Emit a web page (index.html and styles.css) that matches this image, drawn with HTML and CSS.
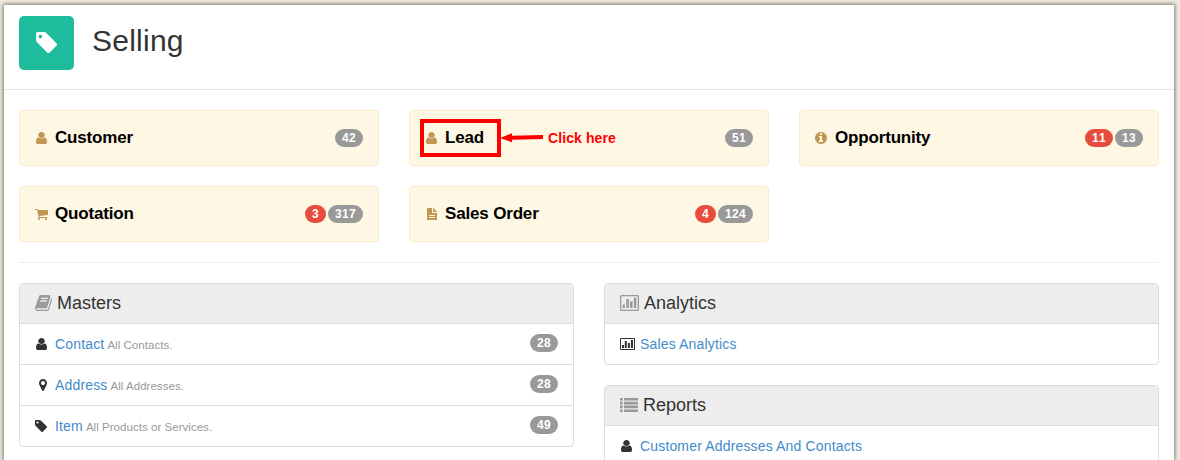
FILE: index.html
```
<!DOCTYPE html>
<html lang="en">
<head>
<meta charset="utf-8">
<title>Selling</title>
<link rel="stylesheet" href="styles.css">
</head>
<body>
<svg class="sprite">
  <symbol id="user" viewBox="256 128 1280 1536" preserveAspectRatio="none"><path d="M1536 1399q0 109-62.5 187t-150.5 78h-854q-88 0-150.5-78t-62.5-187q0-85 8.5-160.5t31.5-152 58.5-131 94-89 134.5-34.5q131 128 313 128t313-128q76 0 134.5 34.5t94 89 58.5 131 31.5 152 8.5 160.5zm-256-887q0 159-112.5 271.5t-271.5 112.5-271.5-112.5-112.5-271.5 112.5-271.5 271.5-112.5 271.5 112.5 112.5 271.5z"/></symbol>
  <symbol id="tag" viewBox="128 128 1516 1516" preserveAspectRatio="none"><path d="M576 448q0-53-37.5-90.5t-90.5-37.5-90.5 37.5-37.5 90.5 37.5 90.5 90.5 37.5 90.5-37.5 37.5-90.5zm1067 576q0 53-37 90l-491 492q-39 37-91 37-53 0-90-37l-715-716q-38-37-64.5-101t-26.5-117v-416q0-52 38-90t90-38h416q53 0 117 26.5t102 64.5l715 714q37 39 37 91z"/></symbol>
  <symbol id="marker" viewBox="384 128 1024 1536" preserveAspectRatio="none"><path d="M1152 640q0-106-75-181t-181-75-181 75-75 181 75 181 181 75 181-75 75-181zm256 0q0 109-33 179l-364 774q-16 33-47.5 52t-67.5 19-67.5-19-46.5-52l-365-774q-33-70-33-179 0-212 150-362t362-150 362 150 150 362z"/></symbol>
  <symbol id="cart" viewBox="64 256 1664 1408" preserveAspectRatio="none"><path d="M704 1536q0 52-38 90t-90 38-90-38-38-90 38-90 90-38 90 38 38 90zm896 0q0 52-38 90t-90 38-90-38-38-90 38-90 90-38 90 38 38 90zm128-1088v512q0 24-16.5 42.5t-40.5 21.5l-1044 122q13 60 13 70 0 16-24 64h920q26 0 45 19t19 45-19 45-45 19h-1024q-26 0-45-19t-19-45q0-11 8-31.5t16-36 21.5-40 15.5-29.5l-177-823h-204q-26 0-45-19t-19-45 19-45 45-19h256q16 0 28.5 6.5t19.5 15.5 13 24.5 8 26 5.5 29.5 4.5 26h1201q26 0 45 19t19 45z"/></symbol>
  <symbol id="info" viewBox="128 128 1536 1536"><path d="M1152 1376v-160q0-14-9-23t-23-9h-96v-512q0-14-9-23t-23-9h-320q-14 0-23 9t-9 23v160q0 14 9 23t23 9h96v320h-96q-14 0-23 9t-9 23v160q0 14 9 23t23 9h448q14 0 23-9t9-23zm-128-896v-160q0-14-9-23t-23-9h-192q-14 0-23 9t-9 23v160q0 14 9 23t23 9h192q14 0 23-9t9-23zm640 416q0 209-103 385.5t-279.5 279.5-385.5 103-385.5-103-279.5-279.5-103-385.5 103-385.5 279.5-279.5 385.5-103 385.5 103 279.5 279.5 103 385.5z"/></symbol>
  <symbol id="file" viewBox="0 0 10 12"><path fill-rule="evenodd" d="M.6 0H5v4.4q0 .6.6.6H10v6.4q0 .6-.6.6H.6Q0 12 0 11.4V.6Q0 0 .6 0zM6 0q.4.1.7.4l2.9 2.9q.3.3.4.7H6zM2 7v1h6V7zM2 9v1h6V9z"/></symbol>
  <symbol id="book" viewBox="63 128 1668 1536" preserveAspectRatio="none"><path d="M1703 478q40 57 18 129l-275 906q-19 64-76.5 107.5t-122.5 43.5h-923q-77 0-148.5-53.5t-99.5-131.5q-24-67-2-127 0-4 3-27t4-37q1-8-3-21.5t-3-19.5q2-11 8-21t16.5-23.5 16.5-23.5q23-38 45-91.5t30-91.5q3-10 .5-30t-.5-28q3-11 17-28t17-23q21-36 42-92t25-90q1-9-2.5-32t.5-28q4-13 22-30.5t22-22.5q19-26 42.5-84.5t27.5-96.5q1-8-3-25.5t-2-26.5q2-8 9-18t18-23 17-21q8-12 16.5-30.5t15-35 16-36 19.5-32 26.5-23.5 36-11.5 47.5 5.5l-1 3q38-9 51-9h761q74 0 114 56t18 130l-274 906q-36 119-71.5 153.5t-128.5 34.5h-869q-27 0-38 15-11 16-1 43 24 70 144 70h923q29 0 56-15.5t35-41.5l300-987q7-22 5-57 38 15 59 43zm-1064 2q-4 13 2 22.5t20 9.5h608q13 0 25.5-9.5t16.5-22.5l21-64q4-13-2-22.5t-20-9.5h-608q-13 0-25.5 9.5t-16.5 22.5zm-83 256q-4 13 2 22.5t20 9.5h608q13 0 25.5-9.5t16.5-22.5l21-64q4-13-2-22.5t-20-9.5h-608q-13 0-25.5 9.5t-16.5 22.5z"/></symbol>
  <symbol id="chart" viewBox="0 0 15 12"><path fill-rule="evenodd" d="M1 0h13q1 0 1 1v10q0 1-1 1H1q-1 0-1-1V1q0-1 1-1zm0 1v10h13V1zM2 7h2v3H2zM4.8 3h2v7h-2zM7.9 5h2v5h-2zM10.9 2h2.1v8h-2.1z"/></symbol>
  <symbol id="chart-lg" viewBox="0 0 19 16"><path fill-rule="evenodd" d="M1.5 0h16Q19 0 19 1.5v13q0 1.5-1.5 1.5h-16Q0 16 0 14.5v-13Q0 0 1.5 0zm.2 1.3q-.4 0-.4.4v12.6q0 .4.4.4h15.6q.4 0 .4-.4V1.7q0-.4-.4-.4zM2.6 9.5h2.3V13H2.6zM6.3 4h2.5v9H6.3zM10 6.5h2.5V13H10zM13.8 2.8h2.5V13h-2.5z"/></symbol>
  <symbol id="list" viewBox="0 0 18 14"><path d="M0 0h2.7v2.6H0zM4 0h14v2.6H4zM0 3.8h2.7v2.6H0zM4 3.8h14v2.6H4zM0 7.6h2.7v2.6H0zM4 7.6h14v2.6H4zM0 11.4h2.7V14H0zM4 11.4h14V14H4z"/></symbol>
</svg>

<main class="page">
  <header class="title-bar">
    <span class="app-icon"><svg class="i-app"><use href="#tag"/></svg></span>
    <h1>Selling</h1>
  </header>
  <div class="content">
    <section class="cards">
      <a class="card"><span class="slot"><svg class="i-user"><use href="#user"/></svg></span><b>Customer</b><span class="badge">42</span></a>
      <a class="card"><span class="slot"><svg class="i-user"><use href="#user"/></svg></span><b>Lead</b><span class="badge">51</span>
        <span class="callout-box"></span>
        <svg class="callout-arrow" viewBox="0 0 44 10"><path d="M0 5 12 .2V2.8L43 2v4l-31 .8v2.5z"/></svg>
        <span class="callout-text">Click here</span>
      </a>
      <a class="card"><span class="slot"><svg class="i-info"><use href="#info"/></svg></span><b>Opportunity</b><span class="badge open">11</span><span class="badge">13</span></a>
      <a class="card"><span class="slot"><svg class="i-cart"><use href="#cart"/></svg></span><b>Quotation</b><span class="badge open">3</span><span class="badge">317</span></a>
      <a class="card"><span class="slot"><svg class="i-file"><use href="#file"/></svg></span><b>Sales Order</b><span class="badge open">4</span><span class="badge">124</span></a>
    </section>
    <section class="columns">
      <div class="column">
        <div class="panel">
          <h2><svg class="i-book"><use href="#book"/></svg>Masters</h2>
          <div class="row"><span class="slot"><svg class="i-user"><use href="#user"/></svg></span><a>Contact</a><small>All Contacts.</small><span class="badge">28</span></div>
          <div class="row"><span class="slot"><svg class="i-marker"><use href="#marker"/></svg></span><a>Address</a><small>All Addresses.</small><span class="badge">28</span></div>
          <div class="row"><span class="slot"><svg class="i-tag"><use href="#tag"/></svg></span><a>Item</a><small>All Products or Services.</small><span class="badge">49</span></div>
        </div>
      </div>
      <div class="column">
        <div class="panel">
          <h2><svg class="i-chart-lg"><use href="#chart-lg"/></svg>Analytics</h2>
          <div class="row"><span class="slot"><svg class="i-chart"><use href="#chart"/></svg></span><a>Sales Analytics</a></div>
        </div>
        <div class="panel">
          <h2><svg class="i-list"><use href="#list"/></svg>Reports</h2>
          <div class="row"><span class="slot"><svg class="i-user"><use href="#user"/></svg></span><a>Customer Addresses And Contacts</a></div>
        </div>
      </div>
    </section>
  </div>
</main>
</body>
</html>
```
FILE: styles.css
```
* { box-sizing: border-box; }
body {
  margin: 0;
  height: 460px;
  overflow: hidden;
  padding: 5px 6px 0 4px;
  background: #f3ebe0;
  font: 14px/20px "Liberation Sans", Arial, sans-serif;
  color: #333;
}
.sprite { position: absolute; width: 0; height: 0; }
svg { display: block; flex: none; fill: currentColor; }
.page { height: 455px; background: #fff; box-shadow: 0 0 4px 1px rgba(0, 0, 0, .5); }

.title-bar {
  display: flex;
  align-items: flex-start;
  gap: 18px;
  height: 85px;
  padding: 11px 15px 0;
  border-bottom: 1px solid #e5e5e5;
}
.app-icon {
  display: flex;
  width: 55px;
  height: 54px;
  padding: 16px 0 0 17px;
  border-radius: 5px;
  background: #1cbc9c;
  color: #fff;
}
h1 { margin: 8px 0 0; font-size: 30px; line-height: 34px; font-weight: 400; letter-spacing: .25px; }

.content { height: 370px; padding: 20px 15px 0; overflow: hidden; }
.cards {
  display: grid;
  grid-template-columns: repeat(3, 360px);
  gap: 20px 30px;
  padding-bottom: 20px;
  border-bottom: 1px solid #eee;
}
.card {
  position: relative;
  display: flex;
  align-items: center;
  height: 56px;
  padding: 0 15px;
  border: 1px solid #faebcc;
  border-radius: 4px;
  background: #fdf7e3;
  color: #c09853;
}
.card b { margin-right: auto; padding-bottom: 1px; color: #000; font-size: 17px; line-height: 22px; letter-spacing: -.17px; }
.slot { display: flex; align-items: center; width: 20px; height: 14px; }
.badge {
  height: 18px;
  padding: 0 7px;
  border-radius: 9px;
  background: #999;
  color: #fff;
  font-size: 12px;
  font-weight: 700;
  line-height: 18px;
  letter-spacing: .33px;
  font-kerning: none;
}
.badge.open { margin-right: 2px; background: #e74c3c; }

.callout-box { position: absolute; left: 10px; top: 8px; width: 81px; height: 38px; border: 4px solid #f00; }
.callout-arrow { position: absolute; left: 90px; top: 22px; width: 44px; height: 10px; color: #f00; }
.callout-text { position: absolute; left: 138px; top: 17px; color: #f00; font-weight: 700; letter-spacing: .1px; }

.columns { display: grid; grid-template-columns: 555px 555px; gap: 30px; padding-top: 20px; }
.column { display: flex; flex-direction: column; gap: 20px; }
.panel { flex: none; border: 1px solid #ddd; border-radius: 4px; overflow: hidden; }
h2 {
  display: flex;
  align-items: center;
  height: 39px;
  margin: 0;
  padding: 0 15px 2px;
  background: #ededed;
  font-size: 18px;
  font-weight: 400;
}
h2 svg { color: #999; }
.row { display: flex; align-items: center; height: 41px; padding: 0 15px; border-top: 1px solid #ddd; }
.row a { color: #428bca; letter-spacing: .16px; }
.row small { margin: 1px 0 0 3px; color: #999; font-size: 11.5px; letter-spacing: .04px; }
.row .badge { margin: 0 0 2px auto; }

.i-app { width: 21px; height: 21px; }
.i-user { width: 11px; height: 12px; margin-left: 1px; }
.i-info { width: 12px; height: 12px; }
.i-cart { width: 13px; height: 11px; margin-top: 1px; }
.i-file { width: 10px; height: 12px; margin-left: 2px; }
.i-marker { width: 8px; height: 12px; margin-left: 4px; }
.i-tag { width: 12px; height: 12px; }
.i-chart { width: 15px; height: 12px; }
.i-book { width: 17px; height: 16px; margin-right: 5px; }
.i-chart-lg { width: 19px; height: 16px; margin-right: 5px; }
.i-list { width: 18px; height: 14px; margin-right: 5px; }
```
